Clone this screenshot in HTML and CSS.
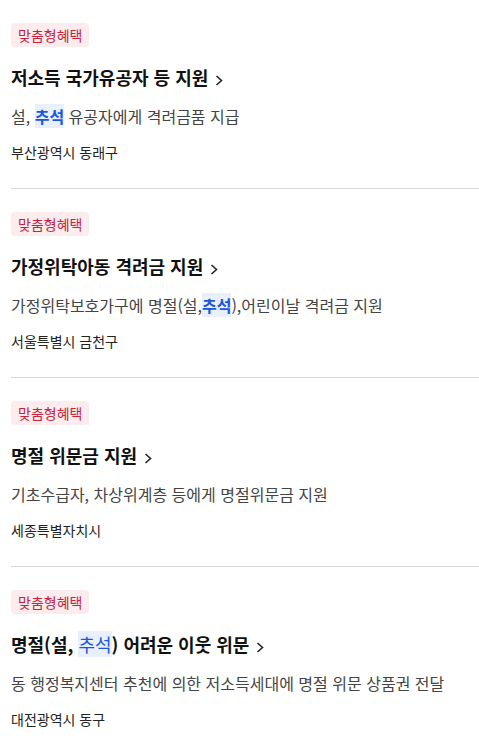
FILE: index.html
```html
<!DOCTYPE html>
<html lang="ko">
<head>
    <meta charset="utf-8">
    <meta name="viewport" content="width=device-width, initial-scale=1.0">
    <title>맞춤형혜택</title>
    <link rel="stylesheet" href="styles.css">
</head>
<body>
    <ul class="benefit-list">
        <li class="benefit">
            <span class="badge">맞춤형혜택</span>
            <a class="title" href="#">저소득 국가유공자 등 지원<svg class="chev" viewBox="0 0 8 11" width="8" height="11"><path d="M1.5 1 6.5 5.5 1.5 10"/></svg></a>
            <p class="desc">설, <mark class="hl">추석</mark> 유공자에게 격려금품 지급</p>
            <p class="region">부산광역시 동래구</p>
        </li>
        <li class="benefit">
            <span class="badge">맞춤형혜택</span>
            <a class="title" href="#">가정위탁아동 격려금 지원<svg class="chev" viewBox="0 0 8 11" width="8" height="11"><path d="M1.5 1 6.5 5.5 1.5 10"/></svg></a>
            <p class="desc">가정위탁보호가구에 명절(설,<mark class="hl">추석</mark>),어린이날 격려금 지원</p>
            <p class="region">서울특별시 금천구</p>
        </li>
        <li class="benefit">
            <span class="badge">맞춤형혜택</span>
            <a class="title" href="#">명절 위문금 지원<svg class="chev" viewBox="0 0 8 11" width="8" height="11"><path d="M1.5 1 6.5 5.5 1.5 10"/></svg></a>
            <p class="desc">기초수급자, 차상위계층 등에게 명절위문금 지원</p>
            <p class="region">세종특별자치시</p>
        </li>
        <li class="benefit">
            <span class="badge">맞춤형혜택</span>
            <a class="title" href="#">명절(설, <mark class="hl hl-title">추석</mark>) 어려운 이웃 위문<svg class="chev" viewBox="0 0 8 11" width="8" height="11"><path d="M1.5 1 6.5 5.5 1.5 10"/></svg></a>
            <p class="desc">동 행정복지센터 추천에 의한 저소득세대에 명절 위문 상품권 전달</p>
            <p class="region">대전광역시 동구</p>
        </li>
    </ul>
</body>
</html>
```

FILE: styles.css
```css
body {
    margin: 0;
    padding: 0;
    background: #fff;
    font-family: "Noto Sans CJK KR", "Noto Sans", sans-serif;
    color: #111;
}
.benefit-list {
    list-style: none;
    margin: 0;
    padding: 0 0 0 11px;
}
.benefit {
    display: flex;
    flex-direction: column;
    align-items: flex-start;
    padding: 23px 0 26px;
    border-bottom: 1px solid #d9d9d9;
}
.benefit:last-child {
    border-bottom: none;
}
.badge {
    display: inline-block;
    height: 24px;
    line-height: 24px;
    padding: 0 7px;
    font-size: 14px;
    color: #c3253f;
    background: #fdecee;
    border-radius: 4px;
}
.title {
    display: block;
    margin-top: 16px;
    line-height: 28px;
    font-size: 18px;
    font-weight: bold;
    color: #111;
    text-decoration: none;
}
.chev {
    margin-left: 7px;
    vertical-align: -1px;
    fill: none;
    stroke: #222;
    stroke-width: 1.6;
}
.desc {
    margin: 13px 0 0;
    font-size: 16px;
    line-height: 24px;
    color: #444;
}
.region {
    margin: 14px 0 0;
    font-size: 14px;
    line-height: 20px;
    color: #222;
}
.hl {
    background: #e8f0fe;
    color: #1a56db;
    font-weight: bold;
}
.hl-title {
    font-weight: normal;
}
```
